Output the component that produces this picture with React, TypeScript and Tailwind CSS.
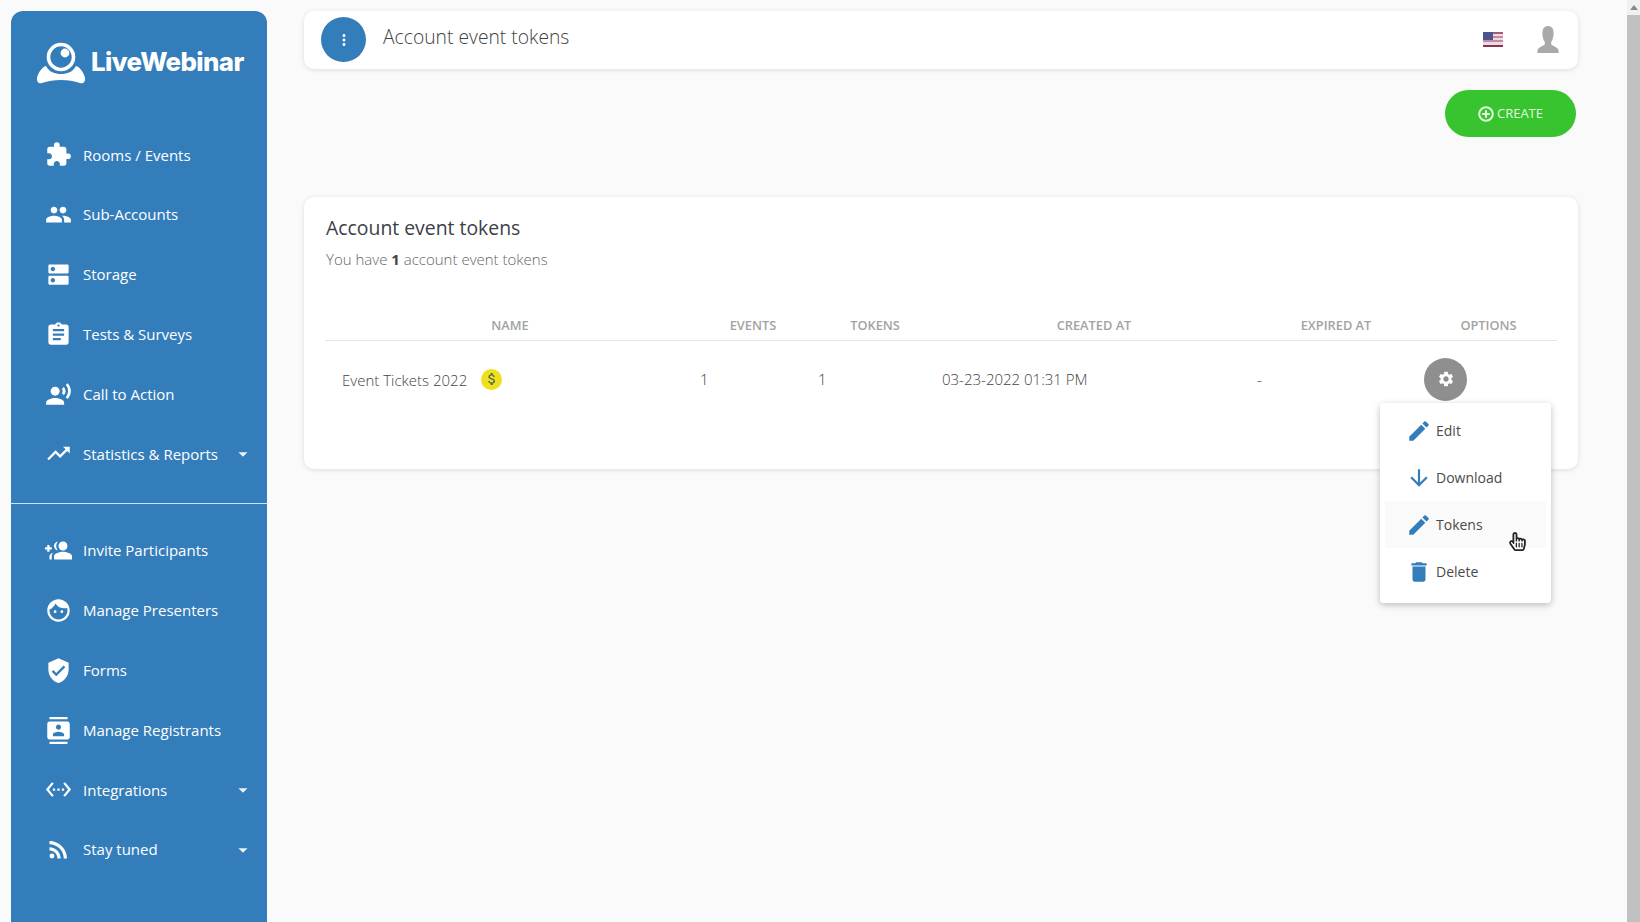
import type { ReactNode } from "react";
import {
  MdArrowDownward,
  MdArrowDropDown,
  MdAssignment,
  MdAttachMoney,
  MdContacts,
  MdDelete,
  MdDns,
  MdEdit,
  MdExtension,
  MdFace,
  MdGroupAdd,
  MdMoreVert,
  MdPeople,
  MdRecordVoiceOver,
  MdRssFeed,
  MdSettings,
  MdSettingsEthernet,
  MdTrendingUp,
  MdVerifiedUser,
} from "react-icons/md";
import { FaRegHandPointer } from "react-icons/fa";

function NavItem({ icon, label, caret }: { icon: ReactNode; label: string; caret?: boolean }) {
  return (
    <div className="flex h-[59.800px] items-center pl-[34px] pr-[13px] text-[15px] text-white">
      <span className="flex w-[27px] justify-center text-[27px]">{icon}</span>
      <span className="ml-[11px] flex-1">{label}</span>
      {caret && <MdArrowDropDown className="text-[22px] text-white/90" />}
    </div>
  );
}

function Logo() {
  return (
    <div className="flex h-[63px] items-center pl-[25px] text-white">
      <svg viewBox="0 0 50 42" className="h-[42px] w-[50px]" fill="white">
        <circle cx="25" cy="15" r="12.5" fill="none" stroke="white" strokeWidth="3.6" />
        <circle cx="29" cy="11" r="4.4" />
        <path d="M10 24c3 6 9 8 15 8s12-2 15-8c4 1 8 7 9 12 .6 4-2 6-5 5-6-2-12-3-19-3s-13 1-19 3c-3 1-5.600-1-5-5 1-5 5-11 9-12z" />
      </svg>
      <span className="mb-[2px] ml-[5px] font-['Inter',sans-serif] text-[25.800px] font-extrabold leading-none tracking-[-0.6px]">
        LiveWebinar
      </span>
    </div>
  );
}

function UsFlag() {
  return (
    <svg viewBox="0 0 20 15" className="mb-px h-[15px] w-[20px]">
      <rect width="20" height="15" fill="#e4dce6" />
      <rect y="0" width="20" height="2" fill="#a85a70" />
      <rect y="4" width="20" height="2" fill="#c98a9a" />
      <rect y="8" width="20" height="2" fill="#c98a9a" />
      <rect y="13" width="20" height="2" fill="#8f3247" />
      <rect width="10" height="8" fill="#4a5590" />
    </svg>
  );
}

function Avatar() {
  return (
    <svg viewBox="0 0 22 28" className="mb-px h-[27px] w-[22px]" fill="#a9a9a9">
      <path d="M11 0c4 0 5.800 3 5.800 7.500 0 4-1 7-2.500 9v2.500c1.500 2 7.700 3 7.700 7v2H0v-2c0-4 6.200-5 7.700-7v-2.500c-1.500-2-2.500-5-2.500-9C5.200 3 7 0 11 0z" />
    </svg>
  );
}

function PlusCircle() {
  return (
    <svg viewBox="0 0 16 16" className="mr-[3px] h-[16px] w-[16px]" fill="none" stroke="currentColor" strokeWidth="2">
      <circle cx="8" cy="8" r="6.800" />
      <path d="M8 4.200v7.600M4.200 8h7.600" />
    </svg>
  );
}

function MenuItem({ icon, label, active }: { icon: ReactNode; label: string; active?: boolean }) {
  return (
    <div className={`mx-[5px] flex h-[47px] items-center pl-[21px] text-[14px] text-[#4a4a4a] ${active ? "bg-[#fafafa]" : ""}`}>
      <span className="flex w-[26px] justify-center text-[26px] text-[#347dbb]">{icon}</span>
      <span className="ml-[4px]">{label}</span>
    </div>
  );
}

const columns = "grid grid-cols-[368px_120px_124px_314px_170px_135px]";

export default function App() {
  return (
    <div className="flex h-[922px] w-[1640px] overflow-hidden bg-[#fafafa] font-['Open_Sans',sans-serif]">
      <aside className="ml-[11px] mt-[11px] w-[256px] shrink-0 rounded-t-[12px] bg-[#347dbb] pt-[20px]">
        <Logo />
        <div className="mt-[31px]">
          <NavItem icon={<MdExtension />} label="Rooms / Events" />
          <NavItem icon={<MdPeople />} label="Sub-Accounts" />
          <NavItem icon={<MdDns />} label="Storage" />
          <NavItem icon={<MdAssignment />} label="Tests & Surveys" />
          <NavItem icon={<MdRecordVoiceOver />} label="Call to Action" />
          <NavItem icon={<MdTrendingUp />} label="Statistics & Reports" caret />
        </div>
        <div className="mb-[17px] mt-[19px] h-px bg-[#cfe3f2]" />
        <NavItem icon={<MdGroupAdd className="-scale-x-100" />} label="Invite Participants" />
        <NavItem icon={<MdFace />} label="Manage Presenters" />
        <NavItem icon={<MdVerifiedUser />} label="Forms" />
        <NavItem icon={<MdContacts />} label="Manage Registrants" />
        <NavItem icon={<MdSettingsEthernet />} label="Integrations" caret />
        <NavItem icon={<MdRssFeed />} label="Stay tuned" caret />
      </aside>

      <main className="flex-1 pl-[37px] pr-[49px] pt-[11px]">
        <header className="flex h-[58px] items-center rounded-[10px] bg-white pl-[17px] pr-[18px] shadow-[0_1px_5px_rgba(0,0,0,0.12)]">
          <span className="mb-px flex h-[45px] w-[45px] items-center justify-center rounded-full bg-[#347dbb] text-[18px] text-white">
            <MdMoreVert />
          </span>
          <h1 className="ml-[17px] flex-1 pb-[6px] text-[19.300px] font-light text-[#444]">Account event tokens</h1>
          <UsFlag />
          <span className="ml-[34px] mr-px">
            <Avatar />
          </span>
        </header>

        <div className="mt-[21px] flex justify-end pr-[2px]">
          <button className="flex h-[47px] w-[131px] items-center justify-center rounded-full bg-[#37c42f] text-[13px] text-[#e4f8e0]">
            <PlusCircle />
            CREATE
          </button>
        </div>

        <section className="mt-[60px] h-[272px] rounded-[10px] bg-white px-[21px] pt-[17px] shadow-[0_1px_5px_rgba(0,0,0,0.12)]">
          <h2 className="pl-px text-[19.400px] leading-[28px] text-[#3c4046]">Account event tokens</h2>
          <p className="mt-[5px] pl-px text-[15px] font-light leading-[24px] text-[#666]">
            You have <b className="font-bold text-[#444]">1</b> account event tokens
          </p>

          <div className="relative mt-[38px]">
            <div className={`${columns} h-[32px] border-b border-[#e4e4e4] pt-[4px] text-center text-[12.800px] font-semibold leading-[24px] text-[#a3a3a3]`}>
              <span className="pl-[2px]">NAME</span>
              <span>EVENTS</span>
              <span>TOKENS</span>
              <span>CREATED AT</span>
              <span>EXPIRED AT</span>
              <span>OPTIONS</span>
            </div>
            <div className={`${columns} h-[76px] items-center text-[15px] font-light text-[#444]`}>
              <span className="flex items-center pl-[17px]">
                <span className="pt-[2px]">Event Tickets 2022</span>
                <span className="ml-[14px] flex h-[21px] w-[21px] items-center justify-center rounded-full bg-[#efe01f] text-[16px] text-[#4d6a4a]">
                  <MdAttachMoney />
                </span>
              </span>
              <span className="pl-[7px]">1</span>
              <span className="pl-[5px]">1</span>
              <span className="pl-[5px]">03-23-2022 01:31 PM</span>
              <span className="pl-[6px]">-</span>
              <span className="pl-[3px]">
                <span className="flex h-[43px] w-[43px] items-center justify-center rounded-full bg-[#8f8f8f] text-[18px] text-white">
                  <MdSettings />
                </span>
              </span>
            </div>

            {/* options menu */}
            <div className="absolute left-[1055px] top-[94px] z-10 w-[171px] rounded-[4px] bg-white pb-[8px] pt-[4px] shadow-[0_2px_7px_rgba(0,0,0,0.25)]">
              <MenuItem icon={<MdEdit />} label="Edit" />
              <MenuItem icon={<MdArrowDownward />} label="Download" />
              <MenuItem icon={<MdEdit />} label="Tokens" active />
              <MenuItem icon={<MdDelete />} label="Delete" />
              <FaRegHandPointer className="absolute left-[128px] top-[129px] text-[19px] text-[#222]" />
            </div>
          </div>
        </section>
      </main>

      <div className="flex w-[13px] shrink-0 flex-col bg-[#f1f1f1]">
        <div className="flex h-[15px] items-center justify-center">
          <span className="h-0 w-0 border-x-[4px] border-b-[5px] border-x-transparent border-b-[#8a8a8a]" />
        </div>
        <div className="flex-1 bg-[#c1c1c1]" />
      </div>
    </div>
  );
}
